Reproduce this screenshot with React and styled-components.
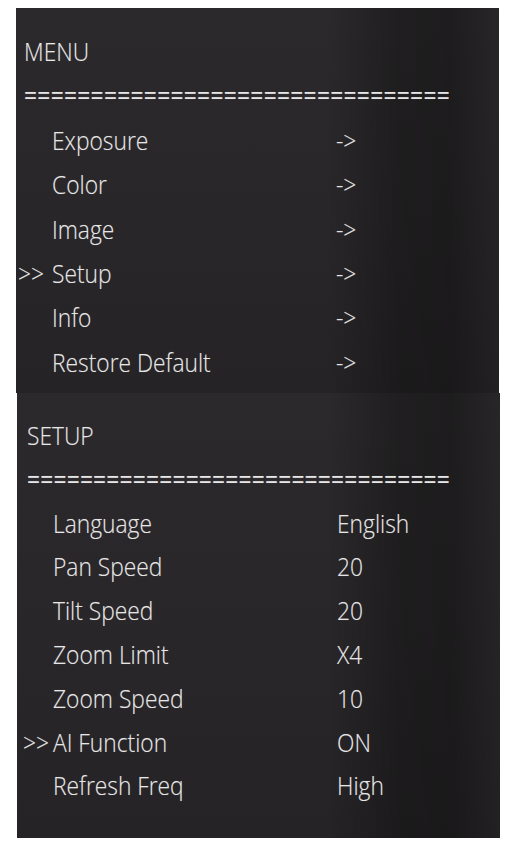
import styled, { createGlobalStyle } from "styled-components";

const GlobalStyle = createGlobalStyle`
  html, body {
    margin: 0;
    padding: 0;
    background: #ffffff;
  }
`;

const Page = styled.div`
  display: flex;
  flex-direction: column;
  padding-top: 8px;
  width: 513px;
  height: 847px;
  box-sizing: border-box;
`;

const Panel = styled.div`
  margin-left: ${(p) => p.$left}px;
  width: 483px;
  height: ${(p) => p.$height}px;
  box-sizing: border-box;
  padding-top: 21px;
  background:
    linear-gradient(to right,
      rgba(0, 0, 0, 0) 0%,
      rgba(0, 0, 0, 0) 64%,
      rgba(0, 0, 0, 0.26) 79%,
      rgba(0, 0, 0, 0.3) 90%,
      rgba(0, 0, 0, 0.08) 100%),
    linear-gradient(to bottom, #2b292b 0%, #282628 60%, #252325 100%);
  font-family: "Open Sans", "Liberation Sans", sans-serif;
  font-weight: 350;
  color: #e6e6e6;
  font-size: 26.5px;
  overflow: hidden;
`;

const Line = styled.div`
  display: grid;
  grid-template-columns: ${(p) => p.$mark}px ${(p) => 36 - p.$mark}px 284px 1fr;
  height: ${(p) => p.$pitch}px;
  line-height: ${(p) => p.$pitch}px;
  white-space: nowrap;
`;

const Title = styled.div`
  height: ${(p) => p.$pitch}px;
  line-height: ${(p) => p.$pitch}px;
  padding-left: ${(p) => p.$indent}px;
  white-space: nowrap;
`;

const Text = styled.span`
  display: inline-block;
  transform: scaleX(0.86);
  transform-origin: left center;
  text-shadow: 0 0 1px rgba(255, 255, 255, 0.3);
`;

const Rule = styled(Text)`
  font-weight: 400;
  letter-spacing: ${(p) => p.$spacing}px;
`;

const Cell = styled.div`
  grid-column: ${(p) => p.$col};
`;

function Menu({ title, indent, mark, left, height, pitch, spacing, items }) {
  return (
    <Panel $left={left} $height={height}>
      <Title $pitch={pitch} $indent={indent}>
        <Text>{title}</Text>
      </Title>
      <Title $pitch={pitch} $indent={indent}>
        <Rule $spacing={spacing}>{"=".repeat(32)}</Rule>
      </Title>
      {items.map(([label, value, active]) => (
        <Line key={label} $mark={mark} $pitch={pitch}>
          <Cell $col={2}>
            {active ? <Text>{">>"}</Text> : null}
          </Cell>
          <Cell $col={3}>
            <Text>{label}</Text>
          </Cell>
          <Cell $col={4}>
            <Text>{value}</Text>
          </Cell>
        </Line>
      ))}
    </Panel>
  );
}

const mainItems = [
  ["Exposure", "->"],
  ["Color", "->"],
  ["Image", "->"],
  ["Setup", "->", true],
  ["Info", "->"],
  ["Restore Default", "->"],
];

const setupItems = [
  ["Language", "English"],
  ["Pan Speed", "20"],
  ["Tilt Speed", "20"],
  ["Zoom Limit", "X4"],
  ["Zoom Speed", "10"],
  ["AI Function", "ON", true],
  ["Refresh Freq", "High"],
];

export default function App() {
  return (
    <Page>
      <GlobalStyle />
      <Menu title="MENU" indent={8} mark={2} left={16} height={385} pitch={44.4} spacing={0.33} items={mainItems} />
      <Menu title="SETUP" indent={10} mark={6} left={17} height={445} pitch={43.8} spacing={0.22} items={setupItems} />
    </Page>
  );
}
